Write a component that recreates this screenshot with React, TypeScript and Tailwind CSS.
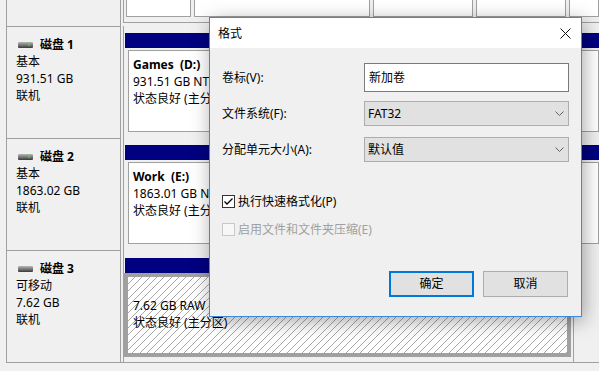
import React from 'react';

type DiskProps = {
  name: string;
  kind: string;
  size: string;
  online?: boolean;
};

function DiskIcon({ online }: { online?: boolean }) {
  return (
    <svg width="15" height="6" viewBox="0 0 15 6" className="shrink-0">
      <defs>
        <linearGradient id="diskFill" x1="0" y1="0" x2="0" y2="1">
          <stop offset="0" stopColor="#b8b8b8" />
          <stop offset="1" stopColor="#3a3a3a" />
        </linearGradient>
      </defs>
      <rect x="0" y="0" width="15" height="6" rx="1" fill="url(#diskFill)" />
      {online && <rect x="10" y="2" width="2" height="2" fill="#35d13a" />}
    </svg>
  );
}

function DiskLabel({ name, kind, size, online }: DiskProps) {
  return (
    <div className="w-[114px] shrink-0 border-t border-r border-[#a0a0a0] pl-[9px] pt-[9px] leading-[17px]">
      <div className="flex items-center">
        <span className="ml-[2px] mr-[7px] flex">
          <DiskIcon online={online} />
        </span>
        <span className="font-bold">{name}</span>
      </div>
      <div>{kind}</div>
      <div>{size}</div>
      <div>联机</div>
    </div>
  );
}

function Volume({ title, size }: { title: string; size: string }) {
  return (
    <div className="ml-[2px] flex-1 border-l border-[#a0a0a0] pl-[1px] pt-[7px]">
      <div className="h-[15px] bg-[#000080]" />
      <div className="mt-[2px] ml-[3px] h-[82px] border border-[#a0a0a0] bg-white pl-[4px] pt-[5px] leading-[17px] whitespace-pre">
        <div className="font-bold">{title}</div>
        <div>{size}</div>
        <div>状态良好 (主分区)</div>
      </div>
    </div>
  );
}

function Field({ label, children, className = '' }: { label: string; children: React.ReactNode; className?: string }) {
  return (
    <div className={`flex items-center ${className}`}>
      <span className="w-[142px] shrink-0 pt-[1px]">{label}</span>
      {children}
    </div>
  );
}

function Select({ value }: { value: string }) {
  return (
    <div className="flex-1 h-full border border-[#adadad] bg-[#e1e1e1] pl-[3px] pr-[4px] flex items-center justify-between">
      <span className="pt-[1px]">{value}</span>
      <svg width="9" height="5" viewBox="0 0 9 5">
        <path d="M0.5 0.5 L4.5 4.5 L8.5 0.5" fill="none" stroke="#606060" strokeWidth="1" />
      </svg>
    </div>
  );
}

export default function App() {
  return (
    <div className="relative w-[599px] h-[371px] overflow-hidden bg-[#f0f0f0] text-[12px] text-black font-['Noto_Sans','Noto_Sans_CJK_SC',sans-serif]">
      {/* disk list */}
      <div className="ml-[6px] border-l border-[#a0a0a0] flex flex-col">
        {/* tail of the previous disk */}
        <div className="h-[26px] flex">
          <div className="w-[114px] shrink-0 border-r border-[#a0a0a0]" />
          <div className="ml-[2px] flex-1 h-[23px] border-l border-b border-[#a0a0a0] flex gap-[2px] pl-[2px]">
            <div className="w-[65px] h-[17px] border-x border-b border-[#a0a0a0] bg-white" />
            <div className="ml-[1px] w-[176px] h-[17px] border-x border-b border-[#a0a0a0] bg-white" />
            <div className="ml-[1px] w-[100px] h-[17px] border-x border-b border-[#a0a0a0] bg-white" />
            <div className="ml-[1px] w-[90px] h-[17px] border-x border-b border-[#a0a0a0] bg-white" />
            <div className="ml-[1px] flex-1 h-[17px] border-x border-b border-[#a0a0a0] bg-white" />
          </div>
        </div>

        <div className="h-[112px] flex">
          <DiskLabel name="磁盘 1" kind="基本" size="931.51 GB" online />
          <Volume title="Games  (D:)" size="931.51 GB NTFS" />
        </div>

        <div className="h-[112px] flex">
          <DiskLabel name="磁盘 2" kind="基本" size="1863.02 GB" online />
          <Volume title="Work  (E:)" size="1863.01 GB NTFS" />
        </div>

        <div className="h-[113px] flex border-b border-[#a0a0a0]">
          <DiskLabel name="磁盘 3" kind="可移动" size="7.62 GB" />
          <div className="ml-[2px] w-[451px] border-l border-r border-[#a0a0a0] pl-[1px] pr-[2px] pt-[8px]">
            <div className="h-[15px] bg-[#000080]" />
            <div className="ml-[-1px] h-[84px] border-[4px] border-[#a0a0a0] bg-[image:repeating-linear-gradient(135deg,#ffffff_0px,#ffffff_4.5px,#a8a8a8_4.5px,#a8a8a8_5.2px)] pl-[5px] pt-[3px] leading-[17px] whitespace-pre">
              <div>&nbsp;</div>
              <div>7.62 GB RAW</div>
              <div>状态良好 (主分区)</div>
            </div>
          </div>
        </div>
      </div>

      {/* format dialog */}
      <div className="absolute left-[209px] top-[17px] w-[373px] h-[300px] border border-[#3b8ad9] bg-[#f0f0f0] shadow-[2px_4px_18px_rgba(0,0,0,0.35)] flex flex-col">
        <div className="h-[30px] bg-white flex items-center justify-between pl-[8px] pr-[10px]">
          <span className="pt-[1px]">格式</span>
          <svg width="11" height="11" viewBox="0 0 11 11">
            <path d="M0.5 0.5 L10.5 10.5 M10.5 0.5 L0.5 10.5" stroke="#111" strokeWidth="1" />
          </svg>
        </div>

        <div className="flex-1 px-[12px] pt-[15px]">
          <Field label="卷标(V):" className="h-[29px]">
            <div className="flex-1 h-full border border-[#7a7a7a] bg-white pl-[4px] pt-[1px] flex items-center">新加卷</div>
          </Field>
          <Field label="文件系统(F):" className="mt-[9px] h-[25px]">
            <Select value="FAT32" />
          </Field>
          <Field label="分配单元大小(A):" className="mt-[11px] h-[25px]">
            <Select value="默认值" />
          </Field>

          <div className="mt-[31px] h-[17px] flex items-center">
            <span className="w-[13px] h-[13px] border border-[#333333] bg-white flex items-center justify-center">
              <svg width="11" height="11" viewBox="0 0 11 11">
                <path d="M1.5 5.5 L4 8 L9.5 2.5" fill="none" stroke="#000" strokeWidth="1.3" />
              </svg>
            </span>
            <span className="ml-[3px] pt-[1px]">执行快速格式化(P)</span>
          </div>
          <div className="mt-[11px] h-[17px] flex items-center text-[#a0a0a0]">
            <span className="w-[13px] h-[13px] border border-[#c8c8c8] bg-[#f7f7f7]" />
            <span className="ml-[3px] pt-[1px]">启用文件和文件夹压缩(E)</span>
          </div>

          <div className="mt-[33px] flex justify-end gap-[9px] pr-[1px]">
            <button className="w-[85px] h-[26px] border-2 border-[#0078d7] bg-[#e1e1e1]">确定</button>
            <button className="w-[85px] h-[26px] border border-[#adadad] bg-[#e1e1e1]">取消</button>
          </div>
        </div>
      </div>
    </div>
  );
}
